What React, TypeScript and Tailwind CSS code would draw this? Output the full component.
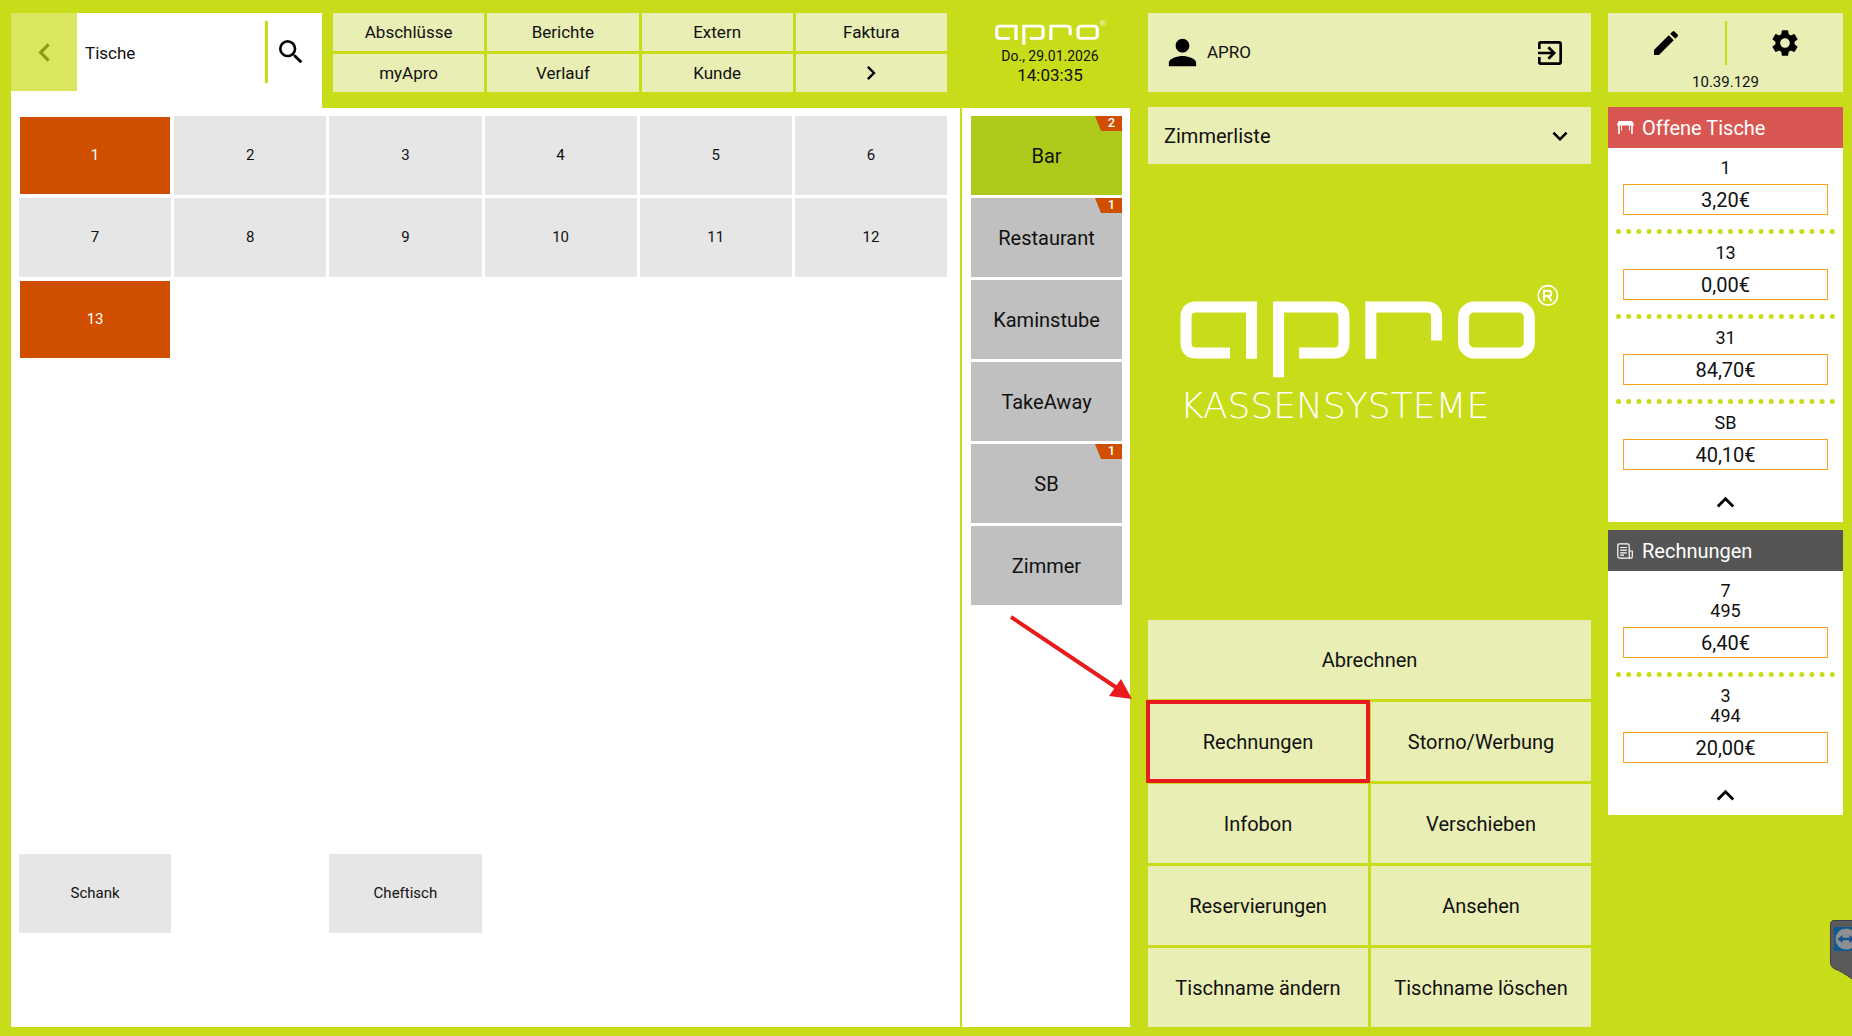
import type { ReactNode } from "react";
import {
  MdChevronLeft,
  MdChevronRight,
  MdEdit,
  MdExitToApp,
  MdKeyboardArrowDown,
  MdKeyboardArrowUp,
  MdPerson,
  MdSearch,
  MdSettings,
} from "react-icons/md";

const navItems = ["Abschlüsse", "Berichte", "Extern", "Faktura", "myApro", "Verlauf", "Kunde"];

type Table = { name: string; place: string; open?: boolean };

const tables: Table[] = [
  { name: "1", place: "col-start-1 row-start-1", open: true },
  { name: "2", place: "col-start-2 row-start-1" },
  { name: "3", place: "col-start-3 row-start-1" },
  { name: "4", place: "col-start-4 row-start-1" },
  { name: "5", place: "col-start-5 row-start-1" },
  { name: "6", place: "col-start-6 row-start-1" },
  { name: "7", place: "col-start-1 row-start-2" },
  { name: "8", place: "col-start-2 row-start-2" },
  { name: "9", place: "col-start-3 row-start-2" },
  { name: "10", place: "col-start-4 row-start-2" },
  { name: "11", place: "col-start-5 row-start-2" },
  { name: "12", place: "col-start-6 row-start-2" },
  { name: "13", place: "col-start-1 row-start-3", open: true },
  { name: "Schank", place: "col-start-1 row-start-10" },
  { name: "Cheftisch", place: "col-start-3 row-start-10" },
];

const areas = [
  { name: "Bar", count: 2, active: true },
  { name: "Restaurant", count: 1 },
  { name: "Kaminstube" },
  { name: "TakeAway" },
  { name: "SB", count: 1 },
  { name: "Zimmer" },
];

const actions = [
  "Storno/Werbung",
  "Infobon",
  "Verschieben",
  "Reservierungen",
  "Ansehen",
  "Tischname ändern",
  "Tischname löschen",
];

const openTables = [
  { lines: ["1"], amount: "3,20€" },
  { lines: ["13"], amount: "0,00€" },
  { lines: ["31"], amount: "84,70€" },
  { lines: ["SB"], amount: "40,10€" },
];

const invoices = [
  { lines: ["7", "495"], amount: "6,40€" },
  { lines: ["3", "494"], amount: "20,00€" },
];

function AproMark({ className }: { className: string }) {
  return (
    <svg
      viewBox="150 72 1136 280"
      preserveAspectRatio="none"
      className={className}
      role="img"
      aria-label="apro"
      fill="none"
      stroke="#fff"
      strokeWidth="33"
    >
      <path d="M364.500 295V140.500H198Q168 140.500 168 172V246Q168 277.500 198 277.500H300" />
      <path d="M445.500 350V140.500H611Q641.500 140.500 641.500 172V246Q641.500 277.500 611 277.500H507" />
      <path d="M722 295V140.500H888Q919 140.500 919 172V240" />
      <rect x="1000" y="140.500" width="197" height="137" rx="31" />
      <circle cx="1252.500" cy="106" r="29" strokeWidth="5" />
      <path d="M1241 123V92H1254Q1263 92 1263 100Q1263 108 1254 108H1241M1254 108L1264 123" strokeWidth="6" />
    </svg>
  );
}

function TableIcon() {
  return (
    <svg viewBox="0 0 17 13" className="h-[13px] w-[17px]" fill="#fff" aria-hidden="true">
      <path d="M2 0H15Q17 2 17 4.500H0Q0 2 2 0Z" />
      <path d="M1.200 4H2.800V13H1.200ZM4 4H5V9.500H4ZM12 4H13V9.500H12ZM14.200 4H15.800V13H14.200Z" />
    </svg>
  );
}

function InvoiceIcon() {
  return (
    <svg viewBox="0 0 16 16" className="size-4" fill="none" stroke="#fff" strokeWidth="1.200" aria-hidden="true">
      <path d="M13.800 15.200H3Q.8 15.200 .8 13V2.500Q.8 .8 2.500 .8H10.500Q12.200 .8 12.200 2.500V13.500Q12.400 15.200 13.800 15.200Q15.300 15.200 15.300 13.500V8H12.200" />
      <path d="M3.200 4.500H9.800M3.200 7.200H9.800M3.200 9.800H9.800M3.200 12.200H7" />
    </svg>
  );
}

function Panel({
  title,
  icon,
  headClass,
  entries,
}: {
  title: string;
  icon: ReactNode;
  headClass: string;
  entries: { lines: string[]; amount: string }[];
}) {
  return (
    <section className="bg-white">
      <h2 className={`flex h-[41px] items-center pl-[9px] text-xl text-white ${headClass}`}>
        <span className="flex w-[25px] items-center">{icon}</span>
        {title}
      </h2>
      <ul className="px-2 pt-[10px]">
        {entries.map((e, i) => (
          <li key={e.amount} className="text-center">
            {i > 0 && <div className="mt-[14px] mb-[9px] border-t-[5px] border-dotted border-[#c8dc19]" />}
            <button className="block w-full px-[7px]">
              {e.lines.map((l) => (
                <span key={l} className="block text-lg leading-5">
                  {l}
                </span>
              ))}
              <span className="mt-[6px] flex h-[31px] items-center justify-center border border-[#ffa21a] text-xl">
                {e.amount}
              </span>
            </button>
          </li>
        ))}
      </ul>
      <button aria-label={`${title} einklappen`} className="flex h-[52px] w-full items-center justify-center pt-3 text-black">
        <MdKeyboardArrowUp className="size-[35px]" />
      </button>
    </section>
  );
}

export default function App() {
  return (
    <div className="relative flex min-h-screen flex-col overflow-hidden bg-[#c8dc19] pt-[13px] pr-[9px] pb-[9px] pl-[11px] font-[Roboto,sans-serif] text-[#111]">
      <div className="flex grow">
        <main className="flex min-w-0 grow flex-col">
          <header className="flex h-[95px]">
            <div className="flex w-[311px] shrink-0 bg-white">
              <button
                aria-label="Zurück"
                className="flex h-[78px] w-[66px] shrink-0 items-center justify-center bg-[#dae65e] text-[#8d9a12]"
              >
                <MdChevronLeft className="size-[37px]" />
              </button>
              <input
                aria-label="Suche"
                defaultValue="Tische"
                className="h-[79px] min-w-0 grow px-2 text-[17px] outline-none"
              />
              <button
                aria-label="Suchen"
                className="mt-2 flex h-[62px] w-[57px] shrink-0 items-center border-l-[3px] border-[#c8dc19] pl-[7px] text-black"
              >
                <MdSearch className="size-8" />
              </button>
            </div>
            <nav className="ml-[11px] grid h-[79px] grow grid-cols-4 grid-rows-2 gap-[3px] pr-[13px]">
              {navItems.map((n) => (
                <button key={n} className="bg-[#e9eeb5] pt-0.5 text-[17px]">
                  {n}
                </button>
              ))}
              <button aria-label="Weiter" className="flex items-center justify-center bg-[#e9eeb5] text-black">
                <MdChevronRight className="size-7" />
              </button>
            </nav>
          </header>
          <div className="grow bg-white px-2 pt-2 pr-[13px]">
            <div className="grid auto-rows-[79px] grid-cols-6 gap-[3px]">
              {tables.map((t) => (
                <button
                  key={t.name}
                  className={`text-[15px] ${t.place} ${t.open ? "border border-white bg-[#d04e00] text-white" : "bg-[#e6e6e6]"}`}
                >
                  {t.name}
                </button>
              ))}
            </div>
          </div>
        </main>

        <aside className="ml-[2px] flex w-[168px] shrink-0 flex-col">
          <div className="flex h-[95px] flex-col items-center pt-[7px] pl-2">
            <AproMark className="h-[25px] w-[111px]" />
            <div className="mt-[2px] text-sm leading-[18px]">Do., 29.01.2026</div>
            <div className="text-[17px] leading-5">14:03:35</div>
          </div>
          <div className="flex grow flex-col gap-[3px] bg-white pt-2 pr-2 pl-[9px]">
            {areas.map((a) => (
              <button
                key={a.name}
                className={`relative h-[79px] text-xl ${a.active ? "bg-[#aeca1c]" : "bg-[#c0c0c0]"}`}
              >
                {a.name}
                {a.count && (
                  <span className="absolute top-0 right-0 flex h-[15px] w-[27px] items-center justify-center bg-[#d04e00] pl-[6px] text-[13px] font-medium text-white [clip-path:polygon(0_0,100%_0,100%_100%,6px_100%)]">
                    {a.count}
                  </span>
                )}
              </button>
            ))}
          </div>
        </aside>

        <aside className="ml-[18px] flex w-[443px] shrink-0 flex-col">
          <div className="flex h-[79px] items-center bg-[#e9eeb5] pr-[25px] pl-[14px]">
            <MdPerson className="size-[41px] text-black" />
            <span className="ml-1 grow text-[17px]">APRO</span>
            <button aria-label="Abmelden" className="text-black">
              <MdExitToApp className="size-8" />
            </button>
          </div>
          <button className="mt-[15px] flex h-[57px] items-center justify-between bg-[#e9eeb5] pr-4 pl-4 text-xl">
            Zimmerliste
            <MdKeyboardArrowDown className="size-[30px] text-black" />
          </button>
          <div className="mt-[120px] flex flex-col pl-8 text-white">
            <AproMark className="h-[94px] w-[379px]" />
            <div className="mt-2 font-['DejaVu_Sans',sans-serif] text-4xl leading-10 font-extralight">KASSENSYSTEME</div>
          </div>
          <div className="mt-auto grid auto-rows-[79px] grid-cols-2 gap-[3px] text-xl">
            <button className="col-span-2 bg-[#e9eeb5]">Abrechnen</button>
            <div className="relative">
              <button className="size-full bg-[#e9eeb5] outline-4 -outline-offset-2 outline-[#e81c1c]">Rechnungen</button>
              <svg
                viewBox="0 0 122 86"
                className="pointer-events-none absolute right-full bottom-full mr-4 mb-0.5 h-[86px] w-[122px]"
                aria-hidden="true"
              >
                <path d="M1 3L107 74" stroke="#e81c1c" strokeWidth="4" />
                <path d="M122 85L99 82L111 65Z" fill="#e81c1c" />
              </svg>
            </div>
            {actions.map((a) => (
              <button key={a} className="bg-[#e9eeb5]">
                {a}
              </button>
            ))}
          </div>
        </aside>

        <aside className="ml-[17px] flex w-[235px] shrink-0 flex-col">
          <div className="flex h-[79px] flex-col bg-[#e9eeb5] pt-2">
            <div className="flex h-11 text-black">
              <button aria-label="Bearbeiten" className="flex flex-1 items-center justify-center border-r-2 border-[#c8dc19]">
                <MdEdit className="size-8" />
              </button>
              <button aria-label="Einstellungen" className="flex flex-1 items-center justify-center">
                <MdSettings className="size-8" />
              </button>
            </div>
            <div className="mt-[7px] text-center text-[15px] leading-5">10.39.129</div>
          </div>
          <div className="mt-[15px] flex flex-col gap-2">
            <Panel title="Offene Tische" icon={<TableIcon />} headClass="bg-[#d95752]" entries={openTables} />
            <Panel title="Rechnungen" icon={<InvoiceIcon />} headClass="bg-[#555]" entries={invoices} />
          </div>
        </aside>
      </div>

      <svg
        viewBox="0 0 22 59"
        className="absolute right-0 bottom-[57px] h-[59px] w-[22px]"
        role="img"
        aria-label="Fernwartung"
      >
        <path d="M23 .5H4Q.5 .5 .5 5V42Q.5 47 5 49Q11 51 23 59.500Z" fill="#5a5a5a" stroke="#3c3c4c" />
        <rect x="4" y="7" width="18" height="24" fill="#0d5a8e" />
        <circle cx="16" cy="19" r="10.500" fill="#8c8f94" />
        <path d="M7.500 19L12.500 15V17.800H19.500V15L24.500 19L19.500 23V20.200H12.500V23Z" fill="#17528a" />
      </svg>
    </div>
  );
}
